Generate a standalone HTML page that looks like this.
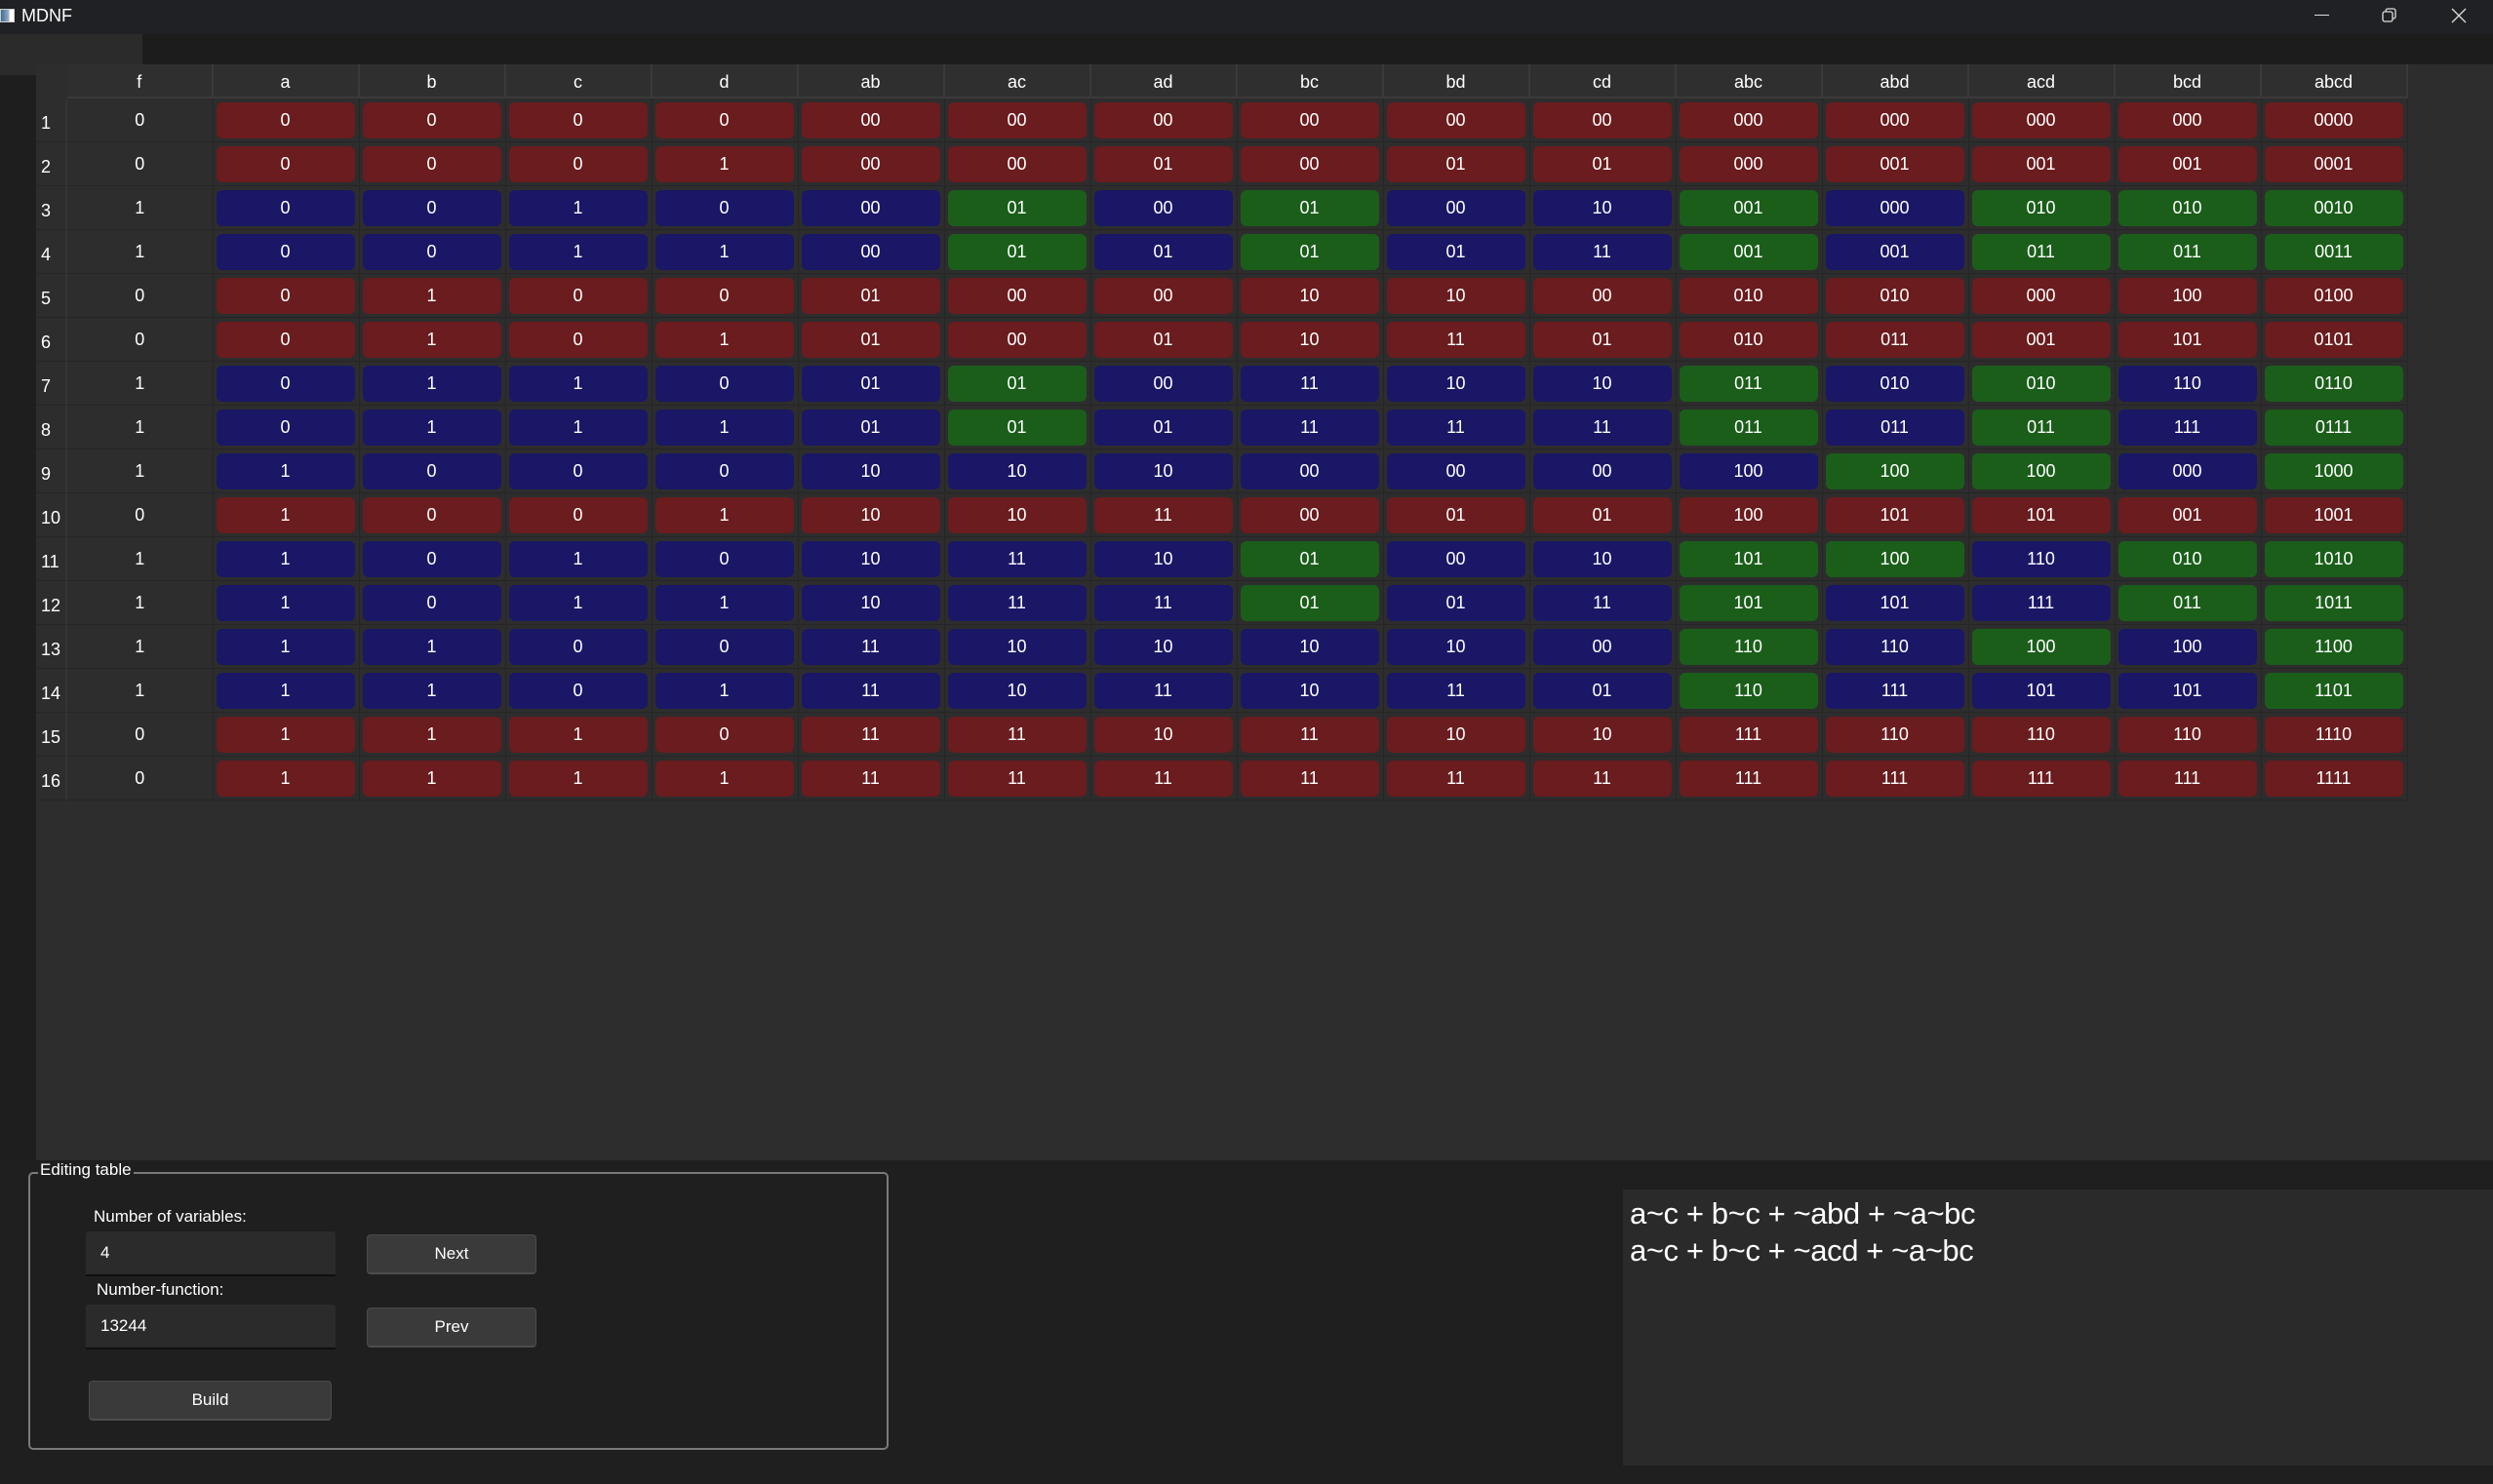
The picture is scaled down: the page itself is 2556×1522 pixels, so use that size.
<!DOCTYPE html>
<html><head><meta charset="utf-8"><style>
*{margin:0;padding:0;box-sizing:border-box}
body{width:2556px;height:1522px;background:#1f1f1f;font-family:"Liberation Sans",sans-serif;color:#fff;position:relative;overflow:hidden}
.abs{position:absolute}
#title{left:0;top:0;width:2556px;height:35px;background:#202124}
#tabs{left:0;top:35px;width:2556px;height:31px;background:#1c1c1c}
#tab{left:0;top:35px;width:146px;height:42px;background:#2b2b2b}
#lstrip{left:0;top:77px;width:37px;height:1113px;background:#1e1e1e}
#tbl{left:37px;top:66px;width:2519px;height:1124px;background:#2d2d2d;border-top-left-radius:6px}
.grid{display:grid;grid-template-columns:32px 149.5px repeat(15,150px);grid-template-rows:35px repeat(16,45px)}
.grid>div{border-right:1px solid #262626;border-bottom:1px solid #262626;font-size:18px;display:flex;align-items:center;justify-content:center}
.grid>.h{background:#2f2f2f;border-right:2px solid #3a3a3a;border-bottom:2px solid #3a3a3a;padding-top:4px}
.grid>.n{justify-content:flex-start;padding-left:5px;padding-top:6px;border-right:2px solid #333}
.grid>.c{padding:4px 4px 3px 3px}
.grid>.c i{font-style:normal;display:flex;width:100%;height:100%;border-radius:6px;align-items:center;justify-content:center}
.r i{background:#6a1c1e}.b i{background:#1a1766}.g i{background:#1a5e1a}
#gb{left:29px;top:1202px;width:882px;height:285px;border:2px solid #7a7a7a;border-radius:5px}
.lbl{font-size:17px;color:#fff}
.inp{background:#2b2b2b;border-bottom:2px solid #0e0e0e;border-radius:3px 3px 0 0;font-size:17px;padding-left:15px;display:flex;align-items:center}
.btn{background:#3a3a3a;border:1px solid #4a4a4a;border-bottom:2px solid #4d4d4d;border-radius:4px;font-size:17px;display:flex;align-items:center;justify-content:center}
#out{left:1664px;top:1220px;width:892px;height:283px;background:#2a2a2a;font-size:31px;letter-spacing:-0.4px;line-height:38px;padding:6px 0 0 7px}
</style></head><body>
<div class="abs" id="title"></div>
<div class="abs" style="left:0;top:9px;width:15px;height:14px;background:linear-gradient(90deg,#3a6f8a,#9ac 60%,#fff 70%);border:1px solid #ccc"></div>
<div class="abs" style="left:22px;top:6px;font-size:18px">MDNF</div>
<div class="abs" style="left:2373px;top:15px;width:15px;height:1px;background:#ddd"></div>
<svg class="abs" style="left:2441px;top:7px" width="18" height="18" viewBox="0 0 18 18" fill="none" stroke="#ddd" stroke-width="1.3"><rect x="2" y="5" width="10" height="10" rx="2"/><path d="M5 5V4a2 2 0 0 1 2-2h6a2 2 0 0 1 2 2v6a2 2 0 0 1-2 2h-1"/></svg>
<svg class="abs" style="left:2512px;top:7px" width="18" height="18" viewBox="0 0 18 18" stroke="#ddd" stroke-width="1.3"><path d="M2 2L16 16M16 2L2 16"/></svg>
<div class="abs" id="tabs"></div>
<div class="abs" id="tab"></div>
<div class="abs" id="lstrip"></div>
<div class="abs" id="tbl"><div class="grid">
<div class="h" style="background:#2d2d2d;border:none"></div><div class="h">f</div><div class="h">a</div><div class="h">b</div><div class="h">c</div><div class="h">d</div><div class="h">ab</div><div class="h">ac</div><div class="h">ad</div><div class="h">bc</div><div class="h">bd</div><div class="h">cd</div><div class="h">abc</div><div class="h">abd</div><div class="h">acd</div><div class="h">bcd</div><div class="h">abcd</div>

<div class="n">1</div><div>0</div><div class="c r"><i>0</i></div><div class="c r"><i>0</i></div><div class="c r"><i>0</i></div><div class="c r"><i>0</i></div><div class="c r"><i>00</i></div><div class="c r"><i>00</i></div><div class="c r"><i>00</i></div><div class="c r"><i>00</i></div><div class="c r"><i>00</i></div><div class="c r"><i>00</i></div><div class="c r"><i>000</i></div><div class="c r"><i>000</i></div><div class="c r"><i>000</i></div><div class="c r"><i>000</i></div><div class="c r"><i>0000</i></div>

<div class="n">2</div><div>0</div><div class="c r"><i>0</i></div><div class="c r"><i>0</i></div><div class="c r"><i>0</i></div><div class="c r"><i>1</i></div><div class="c r"><i>00</i></div><div class="c r"><i>00</i></div><div class="c r"><i>01</i></div><div class="c r"><i>00</i></div><div class="c r"><i>01</i></div><div class="c r"><i>01</i></div><div class="c r"><i>000</i></div><div class="c r"><i>001</i></div><div class="c r"><i>001</i></div><div class="c r"><i>001</i></div><div class="c r"><i>0001</i></div>

<div class="n">3</div><div>1</div><div class="c b"><i>0</i></div><div class="c b"><i>0</i></div><div class="c b"><i>1</i></div><div class="c b"><i>0</i></div><div class="c b"><i>00</i></div><div class="c g"><i>01</i></div><div class="c b"><i>00</i></div><div class="c g"><i>01</i></div><div class="c b"><i>00</i></div><div class="c b"><i>10</i></div><div class="c g"><i>001</i></div><div class="c b"><i>000</i></div><div class="c g"><i>010</i></div><div class="c g"><i>010</i></div><div class="c g"><i>0010</i></div>

<div class="n">4</div><div>1</div><div class="c b"><i>0</i></div><div class="c b"><i>0</i></div><div class="c b"><i>1</i></div><div class="c b"><i>1</i></div><div class="c b"><i>00</i></div><div class="c g"><i>01</i></div><div class="c b"><i>01</i></div><div class="c g"><i>01</i></div><div class="c b"><i>01</i></div><div class="c b"><i>11</i></div><div class="c g"><i>001</i></div><div class="c b"><i>001</i></div><div class="c g"><i>011</i></div><div class="c g"><i>011</i></div><div class="c g"><i>0011</i></div>

<div class="n">5</div><div>0</div><div class="c r"><i>0</i></div><div class="c r"><i>1</i></div><div class="c r"><i>0</i></div><div class="c r"><i>0</i></div><div class="c r"><i>01</i></div><div class="c r"><i>00</i></div><div class="c r"><i>00</i></div><div class="c r"><i>10</i></div><div class="c r"><i>10</i></div><div class="c r"><i>00</i></div><div class="c r"><i>010</i></div><div class="c r"><i>010</i></div><div class="c r"><i>000</i></div><div class="c r"><i>100</i></div><div class="c r"><i>0100</i></div>

<div class="n">6</div><div>0</div><div class="c r"><i>0</i></div><div class="c r"><i>1</i></div><div class="c r"><i>0</i></div><div class="c r"><i>1</i></div><div class="c r"><i>01</i></div><div class="c r"><i>00</i></div><div class="c r"><i>01</i></div><div class="c r"><i>10</i></div><div class="c r"><i>11</i></div><div class="c r"><i>01</i></div><div class="c r"><i>010</i></div><div class="c r"><i>011</i></div><div class="c r"><i>001</i></div><div class="c r"><i>101</i></div><div class="c r"><i>0101</i></div>

<div class="n">7</div><div>1</div><div class="c b"><i>0</i></div><div class="c b"><i>1</i></div><div class="c b"><i>1</i></div><div class="c b"><i>0</i></div><div class="c b"><i>01</i></div><div class="c g"><i>01</i></div><div class="c b"><i>00</i></div><div class="c b"><i>11</i></div><div class="c b"><i>10</i></div><div class="c b"><i>10</i></div><div class="c g"><i>011</i></div><div class="c b"><i>010</i></div><div class="c g"><i>010</i></div><div class="c b"><i>110</i></div><div class="c g"><i>0110</i></div>

<div class="n">8</div><div>1</div><div class="c b"><i>0</i></div><div class="c b"><i>1</i></div><div class="c b"><i>1</i></div><div class="c b"><i>1</i></div><div class="c b"><i>01</i></div><div class="c g"><i>01</i></div><div class="c b"><i>01</i></div><div class="c b"><i>11</i></div><div class="c b"><i>11</i></div><div class="c b"><i>11</i></div><div class="c g"><i>011</i></div><div class="c b"><i>011</i></div><div class="c g"><i>011</i></div><div class="c b"><i>111</i></div><div class="c g"><i>0111</i></div>

<div class="n">9</div><div>1</div><div class="c b"><i>1</i></div><div class="c b"><i>0</i></div><div class="c b"><i>0</i></div><div class="c b"><i>0</i></div><div class="c b"><i>10</i></div><div class="c b"><i>10</i></div><div class="c b"><i>10</i></div><div class="c b"><i>00</i></div><div class="c b"><i>00</i></div><div class="c b"><i>00</i></div><div class="c b"><i>100</i></div><div class="c g"><i>100</i></div><div class="c g"><i>100</i></div><div class="c b"><i>000</i></div><div class="c g"><i>1000</i></div>

<div class="n">10</div><div>0</div><div class="c r"><i>1</i></div><div class="c r"><i>0</i></div><div class="c r"><i>0</i></div><div class="c r"><i>1</i></div><div class="c r"><i>10</i></div><div class="c r"><i>10</i></div><div class="c r"><i>11</i></div><div class="c r"><i>00</i></div><div class="c r"><i>01</i></div><div class="c r"><i>01</i></div><div class="c r"><i>100</i></div><div class="c r"><i>101</i></div><div class="c r"><i>101</i></div><div class="c r"><i>001</i></div><div class="c r"><i>1001</i></div>

<div class="n">11</div><div>1</div><div class="c b"><i>1</i></div><div class="c b"><i>0</i></div><div class="c b"><i>1</i></div><div class="c b"><i>0</i></div><div class="c b"><i>10</i></div><div class="c b"><i>11</i></div><div class="c b"><i>10</i></div><div class="c g"><i>01</i></div><div class="c b"><i>00</i></div><div class="c b"><i>10</i></div><div class="c g"><i>101</i></div><div class="c g"><i>100</i></div><div class="c b"><i>110</i></div><div class="c g"><i>010</i></div><div class="c g"><i>1010</i></div>

<div class="n">12</div><div>1</div><div class="c b"><i>1</i></div><div class="c b"><i>0</i></div><div class="c b"><i>1</i></div><div class="c b"><i>1</i></div><div class="c b"><i>10</i></div><div class="c b"><i>11</i></div><div class="c b"><i>11</i></div><div class="c g"><i>01</i></div><div class="c b"><i>01</i></div><div class="c b"><i>11</i></div><div class="c g"><i>101</i></div><div class="c b"><i>101</i></div><div class="c b"><i>111</i></div><div class="c g"><i>011</i></div><div class="c g"><i>1011</i></div>

<div class="n">13</div><div>1</div><div class="c b"><i>1</i></div><div class="c b"><i>1</i></div><div class="c b"><i>0</i></div><div class="c b"><i>0</i></div><div class="c b"><i>11</i></div><div class="c b"><i>10</i></div><div class="c b"><i>10</i></div><div class="c b"><i>10</i></div><div class="c b"><i>10</i></div><div class="c b"><i>00</i></div><div class="c g"><i>110</i></div><div class="c b"><i>110</i></div><div class="c g"><i>100</i></div><div class="c b"><i>100</i></div><div class="c g"><i>1100</i></div>

<div class="n">14</div><div>1</div><div class="c b"><i>1</i></div><div class="c b"><i>1</i></div><div class="c b"><i>0</i></div><div class="c b"><i>1</i></div><div class="c b"><i>11</i></div><div class="c b"><i>10</i></div><div class="c b"><i>11</i></div><div class="c b"><i>10</i></div><div class="c b"><i>11</i></div><div class="c b"><i>01</i></div><div class="c g"><i>110</i></div><div class="c b"><i>111</i></div><div class="c b"><i>101</i></div><div class="c b"><i>101</i></div><div class="c g"><i>1101</i></div>

<div class="n">15</div><div>0</div><div class="c r"><i>1</i></div><div class="c r"><i>1</i></div><div class="c r"><i>1</i></div><div class="c r"><i>0</i></div><div class="c r"><i>11</i></div><div class="c r"><i>11</i></div><div class="c r"><i>10</i></div><div class="c r"><i>11</i></div><div class="c r"><i>10</i></div><div class="c r"><i>10</i></div><div class="c r"><i>111</i></div><div class="c r"><i>110</i></div><div class="c r"><i>110</i></div><div class="c r"><i>110</i></div><div class="c r"><i>1110</i></div>

<div class="n">16</div><div>0</div><div class="c r"><i>1</i></div><div class="c r"><i>1</i></div><div class="c r"><i>1</i></div><div class="c r"><i>1</i></div><div class="c r"><i>11</i></div><div class="c r"><i>11</i></div><div class="c r"><i>11</i></div><div class="c r"><i>11</i></div><div class="c r"><i>11</i></div><div class="c r"><i>11</i></div><div class="c r"><i>111</i></div><div class="c r"><i>111</i></div><div class="c r"><i>111</i></div><div class="c r"><i>111</i></div><div class="c r"><i>1111</i></div>
</div></div>

<div class="abs" id="gb"></div>
<div class="abs lbl" style="left:39px;top:1190px;background:#1f1f1f;padding:0 2px">Editing table</div>
<div class="abs lbl" style="left:96px;top:1238px">Number of variables:</div>
<div class="abs inp" style="left:88px;top:1263px;width:256px;height:46px">4</div>
<div class="abs btn" style="left:376px;top:1266px;width:174px;height:41px">Next</div>
<div class="abs lbl" style="left:99px;top:1313px">Number-function:</div>
<div class="abs inp" style="left:88px;top:1338px;width:256px;height:46px">13244</div>
<div class="abs btn" style="left:376px;top:1341px;width:174px;height:41px">Prev</div>
<div class="abs btn" style="left:91px;top:1416px;width:249px;height:41px">Build</div>

<div class="abs" id="out">a~c + b~c + ~abd + ~a~bc<br>a~c + b~c + ~acd + ~a~bc</div>
</body></html>
